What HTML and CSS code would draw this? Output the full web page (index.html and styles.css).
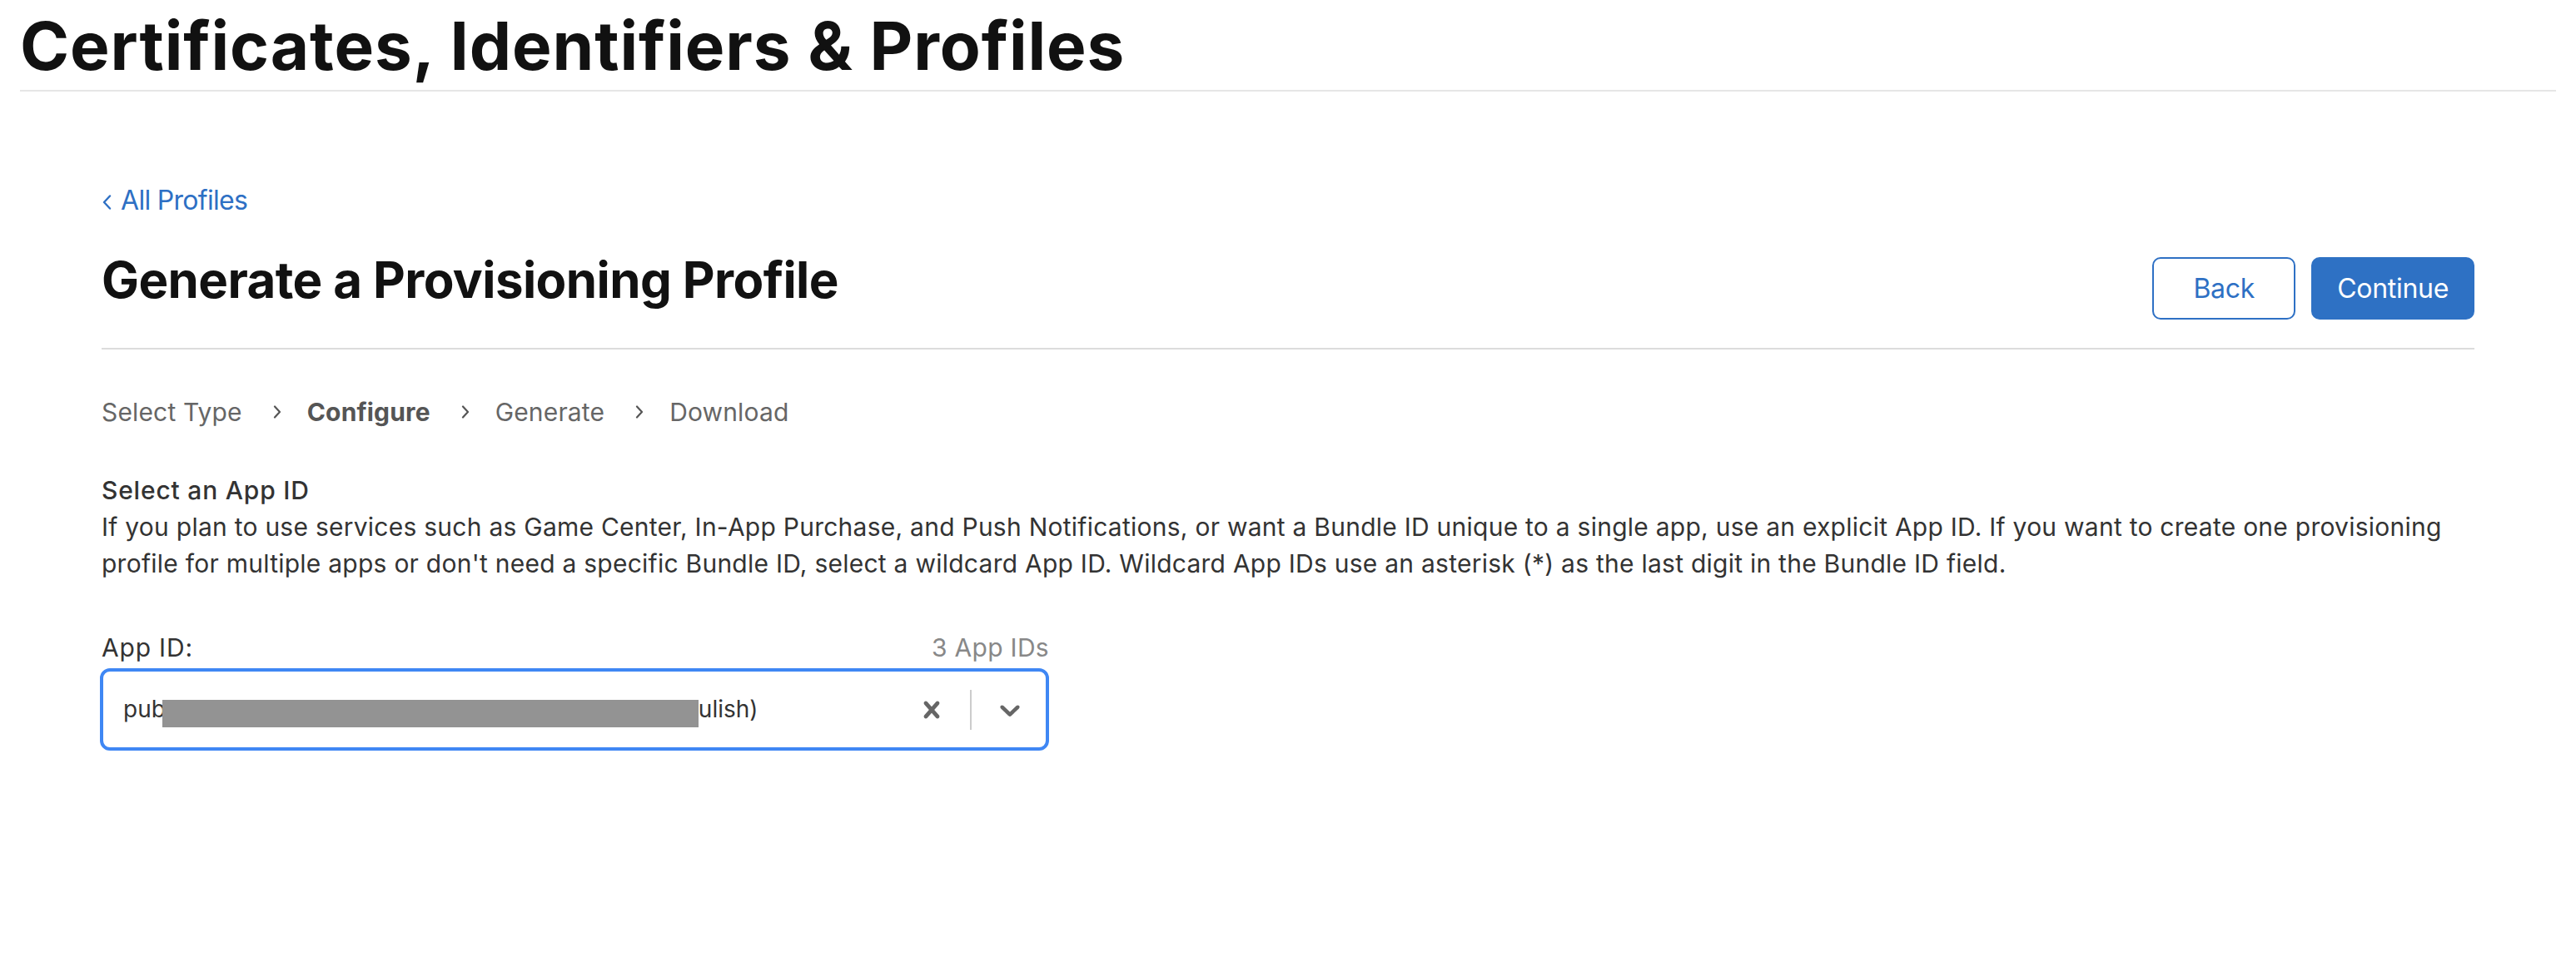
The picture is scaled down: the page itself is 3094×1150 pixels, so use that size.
FILE: index.html
```html
<!DOCTYPE html>
<html lang="en">
<head>
<meta charset="utf-8">
<title>Certificates, Identifiers &amp; Profiles</title>
<link rel="stylesheet" href="styles.css">
</head>
<body>
<header class="site-header">
  <h1 class="site-title">Certificates, Identifiers &amp; Profiles</h1>
</header>
<main class="content">
  <a class="back-link" href="#">
    <svg class="back-chevron" width="12" height="18" viewBox="0 0 12 18"><path d="M10 1.5 L3 9 L10 16.5" fill="none" stroke="currentColor" stroke-width="2.4" stroke-linecap="round" stroke-linejoin="round"/></svg>
    <span>All Profiles</span>
  </a>
  <div class="title-row">
    <h2 class="page-title">Generate a Provisioning Profile</h2>
    <div class="actions">
      <button class="btn btn-secondary" type="button">Back</button>
      <button class="btn btn-primary" type="button">Continue</button>
    </div>
  </div>
  <nav class="steps">
    <span class="step">Select Type</span>
    <svg class="step-chevron" width="10" height="16" viewBox="0 0 10 16"><path d="M2 1.5 L8 8 L2 14.5" fill="none" stroke="currentColor" stroke-width="2.2" stroke-linecap="round" stroke-linejoin="round"/></svg>
    <span class="step step-current">Configure</span>
    <svg class="step-chevron" width="10" height="16" viewBox="0 0 10 16"><path d="M2 1.5 L8 8 L2 14.5" fill="none" stroke="currentColor" stroke-width="2.2" stroke-linecap="round" stroke-linejoin="round"/></svg>
    <span class="step">Generate</span>
    <svg class="step-chevron" width="10" height="16" viewBox="0 0 10 16"><path d="M2 1.5 L8 8 L2 14.5" fill="none" stroke="currentColor" stroke-width="2.2" stroke-linecap="round" stroke-linejoin="round"/></svg>
    <span class="step">Download</span>
  </nav>
  <section class="intro">
    <h3 class="intro-title">Select an App ID</h3>
    <p class="intro-text">If you plan to use services such as Game Center, In-App Purchase, and Push Notifications, or want a Bundle ID unique to a single app, use an explicit App ID. If you want to create one provisioning profile for multiple apps or don't need a specific Bundle ID, select a wildcard App ID. Wildcard App IDs use an asterisk (*) as the last digit in the Bundle ID field.</p>
  </section>
  <div class="field">
    <div class="field-head">
      <label class="field-label">App ID:</label>
      <span class="field-count">3 App IDs</span>
    </div>
    <div class="select">
      <div class="select-value">pub<span class="redact"></span>ulish)</div>
      <div class="select-indicators">
        <span class="indicator clear">
          <svg width="40" height="40" viewBox="0 0 20 20"><path fill="currentColor" d="M14.348 14.849c-0.469 0.469-1.229 0.469-1.697 0l-2.651-3.030-2.651 3.029c-0.469 0.469-1.229 0.469-1.697 0-0.469-0.469-0.469-1.229 0-1.697l2.758-3.15-2.759-3.152c-0.469-0.469-0.469-1.228 0-1.697s1.228-0.469 1.697 0l2.652 3.031 2.651-3.031c0.469-0.469 1.228-0.469 1.697 0s0.469 1.229 0 1.697l-2.758 3.152 2.758 3.150c0.469 0.469 0.469 1.229 0 1.698z"/></svg>
        </span>
        <span class="indicator-sep"></span>
        <span class="indicator dropdown">
          <svg width="40" height="40" viewBox="0 0 20 20"><path fill="currentColor" d="M4.516 7.548c0.436-0.446 1.043-0.481 1.576 0l3.908 3.747 3.908-3.747c0.533-0.481 1.141-0.446 1.574 0 0.436 0.445 0.408 1.197 0 1.615-0.406 0.418-4.695 4.502-4.695 4.502-0.217 0.223-0.502 0.335-0.787 0.335s-0.57-0.112-0.789-0.335c0 0-4.287-4.084-4.695-4.502s-0.436-1.17 0-1.615z"/></svg>
        </span>
      </div>
    </div>
  </div>
</main>
</body>
</html>
```
FILE: styles.css
```css
* { box-sizing: border-box; }

body {
  margin: 0;
  background: #ffffff;
  font-family: Inter, "Noto Sans", "Liberation Sans", sans-serif;
  color: #333333;
}

.site-header {
  margin: 0 24px;
  padding-top: 7px;
  padding-bottom: 5px;
  border-bottom: 2px solid #e6e6e6;
}

.site-title {
  margin: 0;
  font-size: 80px;
  line-height: 96px;
  font-weight: 700;
  color: #111111;
  letter-spacing: 0.85px;
}

.content {
  padding: 0 122px;
}

.back-link {
  display: inline-flex;
  align-items: center;
  margin-top: 111px;
  height: 40px;
  font-size: 32px;
  line-height: 40px;
  letter-spacing: -0.7px;
  color: #2e70c4;
  text-decoration: none;
}

.back-chevron {
  margin-right: 11px;
  margin-top: 4px;
}

.title-row {
  display: flex;
  justify-content: space-between;
  align-items: flex-start;
  margin-top: 39px;
  padding-bottom: 34px;
  border-bottom: 2px solid #dcdcdc;
}

.page-title {
  margin: 0;
  font-size: 60px;
  line-height: 72px;
  font-weight: 700;
  letter-spacing: -0.6px;
  color: #111111;
}

.actions {
  display: flex;
  gap: 19px;
  margin-top: 9px;
}

.btn {
  height: 75px;
  padding: 0 29px;
  border-radius: 10px;
  font-family: inherit;
  font-size: 32px;
  font-weight: 400;
  letter-spacing: -0.3px;
  cursor: pointer;
}

.btn-secondary {
  width: 172px;
  padding: 0;
  background: #ffffff;
  border: 2px solid #2e70c4;
  color: #2e70c4;
}

.btn-primary {
  min-width: 194px;
  background: #2e71c4;
  border: 2px solid #2e71c4;
  color: #ffffff;
}

.steps {
  display: flex;
  align-items: center;
  margin-top: 57px;
  height: 36px;
  font-size: 30px;
  line-height: 36px;
  letter-spacing: 0.15px;
  color: #666666;
}

.step-current {
  font-weight: 700;
  color: #555555;
}

.step-chevron {
  margin: 0 31px 0 37px;
  color: #555555;
}

.intro {
  margin-top: 54px;
}

.intro-title {
  margin: 0;
  font-size: 30px;
  line-height: 44px;
  font-weight: 500;
  letter-spacing: 0.8px;
  color: #333333;
}

.intro-text {
  margin: 0;
  font-size: 30px;
  line-height: 44px;
  letter-spacing: 0.25px;
  color: #333333;
}

.field {
  width: 1138px;
  margin-top: 57px;
}

.field-head {
  display: flex;
  justify-content: space-between;
  align-items: baseline;
  font-size: 30px;
  line-height: 44px;
}

.field-label {
  letter-spacing: 0.8px;
  color: #333333;
}

.field-count {
  font-size: 30px;
  letter-spacing: 0.3px;
  color: #888888;
}

.select {
  display: flex;
  align-items: center;
  height: 99px;
  margin-top: 3px;
  margin-left: -2px;
  border: 4px solid #3f87f4;
  border-radius: 12px;
  background: #ffffff;
}

.select-value {
  flex: 1;
  padding-left: 24px;
  font-size: 28px;
  line-height: 40px;
  color: #333333;
  white-space: nowrap;
}

.redact {
  display: inline-block;
  width: 644px;
  height: 33px;
  margin-left: -4px;
  vertical-align: -12px;
  background: #939393;
}

.select-indicators {
  display: flex;
  align-items: center;
  height: 100%;
  padding-right: 7px;
}

.indicator {
  display: flex;
  align-items: center;
  justify-content: center;
  padding: 0 16px;
  color: #666666;
}

.indicator-sep {
  width: 2px;
  height: 48px;
  margin: 0 10px;
  background: #cccccc;
}
```
